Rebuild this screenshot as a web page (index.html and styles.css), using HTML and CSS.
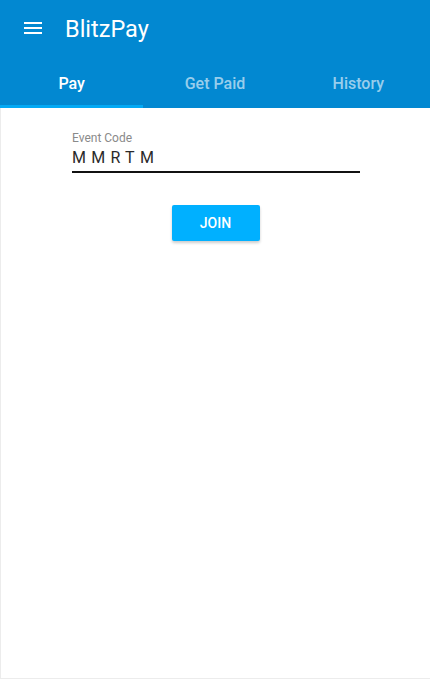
FILE: index.html
```html
<!DOCTYPE html>
<html>
<head>
<meta charset="utf-8">
<link rel="stylesheet" href="styles.css">
</head>
<body>
<div class="app">
  <header class="appbar">
    <div class="toolbar">
      <button class="menu" aria-label="menu">
        <svg width="18" height="12" viewBox="0 0 18 12"><rect x="0" y="0" width="18" height="2" fill="#fff"/><rect x="0" y="5" width="18" height="2" fill="#fff"/><rect x="0" y="10" width="18" height="2" fill="#fff"/></svg>
      </button>
      <h1 class="title">BlitzPay</h1>
    </div>
    <nav class="tabs">
      <div class="tab active">Pay</div>
      <div class="tab">Get Paid</div>
      <div class="tab">History</div>
    </nav>
  </header>
  <main class="content">
    <div class="field">
      <label class="label">Event Code</label>
      <div class="value">MMRTM</div>
    </div>
    <button class="join">JOIN</button>
  </main>
</div>
</body>
</html>
```

FILE: styles.css
```css
* { box-sizing: border-box; }
html, body { margin: 0; padding: 0; height: 100%; }
body { font-family: Roboto, "Noto Sans", sans-serif; background: #fff; }
.app {
  height: 679px;
  display: flex;
  flex-direction: column;
  border-left: 1px solid #ececec;
  border-bottom: 1px solid #ececec;
}
.appbar { background: #0288d1; color: #fff; margin-left: -1px; }
.toolbar { height: 60px; display: flex; align-items: center; padding-left: 24px; }
.menu { background: none; border: 0; padding: 0; width: 18px; height: 12px; display: flex; margin-top: -4px; }
.title { margin: -3px 0 0 23px; font-size: 23.5px; font-weight: 400; }
.tabs { display: flex; height: 48px; }
.tab {
  flex: 1;
  display: flex; align-items: center; justify-content: center;
  font-size: 16px; font-weight: 500;
  color: rgba(255,255,255,0.6);
  border-bottom: 3px solid transparent;
  padding-top: 2px;
}
.tab.active { color: #fff; border-bottom-color: #03a9f4; }
.content { flex: 1; display: flex; flex-direction: column; align-items: center; padding-top: 22px; }
.field { width: 288px; margin-left: 1px; border-bottom: 2px solid #111; padding-bottom: 2px; }
.label { display: block; font-size: 12px; color: #8a8a8a; line-height: 16px; }
.value { font-size: 16px; letter-spacing: 5.3px; color: #2a2a2a; line-height: 22px; padding-top: 1px; }
.join {
  margin-top: 32px;
  width: 88px; height: 36px;
  background: #00b0ff; color: #fff;
  border: 0; border-radius: 2px;
  font-family: Roboto, sans-serif; font-size: 14px; font-weight: 500;
  box-shadow: 0 2px 3px rgba(0,0,0,0.2);
}
```
